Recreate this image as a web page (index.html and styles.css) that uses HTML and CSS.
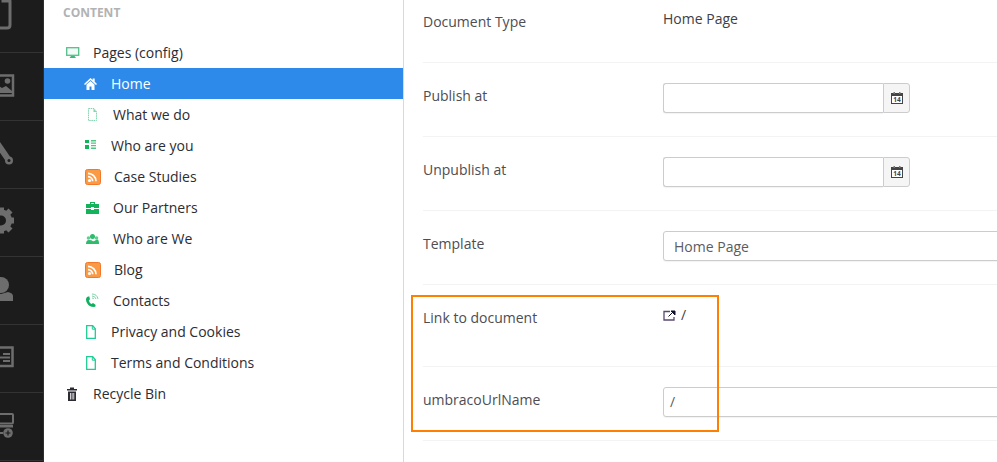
FILE: index.html
```html
<!DOCTYPE html>
<html lang="en">
<head>
<meta charset="utf-8">
<title>Content</title>
<link rel="stylesheet" href="styles.css">
</head>
<body>
<div class="app">
  <nav class="rail">
    <div class="rail-item first"><svg class="rail-icon" viewBox="0 0 28 28"><path d="M4 -8h11l7 7v24q0 3-3 3h-13q-3 0-3-3z" fill="none" stroke="#6d6d6d" stroke-width="3"/><path d="M15 -8v7h7" fill="none" stroke="#6d6d6d" stroke-width="3"/></svg></div>
    <div class="rail-item"><svg class="rail-icon" viewBox="0 0 28 28"><rect x="-2" y="2.500" width="27" height="20" fill="none" stroke="#6d6d6d" stroke-width="2.500"/><circle cx="19.500" cy="8" r="2.800" fill="#6d6d6d"/><path d="M0 20l9-8 5 3 4-2 6 5v2z" fill="#6d6d6d"/></svg></div>
    <div class="rail-item"><svg class="rail-icon" viewBox="0 0 28 28"><path d="M9 2l12 17.500" fill="none" stroke="#6d6d6d" stroke-width="6"/><circle cx="21" cy="19.500" r="4" fill="#6d6d6d"/><circle cx="21" cy="19.500" r="1.500" fill="#1c1c1c"/></svg></div>
    <div class="rail-item"><svg class="rail-icon" viewBox="0 0 28 28"><circle cx="13" cy="11.500" r="8" fill="none" stroke="#6d6d6d" stroke-width="6"/><path d="M22.500 8.500h3.500v6h-3.500zM10 -1.500h6v4h-6zM10 20.500h6v4h-6zM20.500 -.5l4 4-3 3-4-4zM20.500 23.500l4-4-3-3-4 4z" fill="#6d6d6d"/></svg></div>
    <div class="rail-item"><svg class="rail-icon" viewBox="0 0 28 28"><circle cx="13" cy="8" r="8" fill="#6d6d6d"/><path d="M0 24v-5q1-3 6-4l7 2 7-2q5 1 5 4v5z" fill="#6d6d6d"/></svg></div>
    <div class="rail-item"><svg class="rail-icon" viewBox="0 0 28 28"><path d="M0 6h7v-3.500h17.500v18.500h-24.500z" fill="none" stroke="#6d6d6d" stroke-width="2.500"/><path d="M15 8h7v2h-7zM4 11.500h18v2h-18zM15 15h7v2h-7z" fill="#6d6d6d"/></svg></div>
    <div class="rail-item"><svg class="rail-icon" viewBox="0 0 28 28"><rect x="0" y="1" width="25" height="9.500" rx="1" fill="none" stroke="#6d6d6d" stroke-width="2"/><path d="M0 12h25v2.500h-25zM0 19h15v2h-15z" fill="#6d6d6d"/><circle cx="20" cy="20" r="4.800" fill="#6d6d6d"/><path d="M17.500 19.400h5v1.200h-5zM19.400 17.500h1.200v5h-1.200z" fill="#1c1c1c"/></svg></div>
  </nav>

  <aside class="tree">
    <h2 class="tree-title">Content</h2>
    <ul class="tree-list">
      <li class="node root gap-27">
        <svg class="node-icon" viewBox="0 0 18 18"><rect x="0.700" y="4.700" width="12" height="7.600" fill="#f2fbf6" stroke="#52c08a" stroke-width="1.300"/><path d="M5 13h3.500l1.500 2h-6.500z" fill="#3cb878"/></svg>
        <span>Pages (config)</span>
      </li>
      <li class="node active gap-27">
        <svg class="node-icon" viewBox="0 0 18 18"><path d="M6.500 4l2.200 2v-1.500h2v3.300l2.300 2.200-1 .9-5.500-5-5.500 5-1-.9z" fill="#fff"/><path d="M2.500 10.500l4-3.600 4 3.600v5.500h-3v-3.500h-2v3.500h-3z" fill="#fff"/></svg>
        <span>Home</span>
      </li>
      <li class="node gap-29">
        <svg class="node-icon" viewBox="0 0 18 18"><path d="M4.500 3.500h5.500l2.500 3v9h-8z" fill="none" stroke="#7fd6ac" stroke-width="1" stroke-dasharray="1.500 .7"/><path d="M9.500 3.500v3.500h3z" fill="#7fd6ac"/></svg>
        <span>What we do</span>
      </li>
      <li class="node gap-27">
        <svg class="node-icon" viewBox="0 0 18 18"><path d="M1 4h4v3h-4zM1 9h4v4h-4z" fill="#12b35a"/><path d="M7 4h5v1.500h-5zM7 6.500h5v1.300h-5zM7 9h5v1.300h-5zM7 11.500h5v1.500h-5z" fill="#4fc585"/></svg>
        <span>Who are you</span>
      </li>
      <li class="node gap-30">
        <svg class="node-icon" viewBox="0 0 18 18"><use href="#rss"/></svg>
        <span>Case Studies</span>
      </li>
      <li class="node gap-29">
        <svg class="node-icon" viewBox="0 0 18 18"><path d="M6 6v-2h5v2h-1.200v-1h-2.600v1z" fill="#12b35a"/><path d="M2 6h13v4h-5v-1h-3v1h-5zM2 11h5v1h3v-1h5v5h-13z" fill="#12b35a"/></svg>
        <span>Our Partners</span>
      </li>
      <li class="node gap-29">
        <svg class="node-icon" viewBox="0 0 18 18"><circle cx="8.500" cy="7.500" r="2.500" fill="#2dbb6c"/><circle cx="4.500" cy="9" r="1.800" fill="#62cc93"/><circle cx="12.500" cy="9" r="1.800" fill="#62cc93"/><path d="M2 15q0-4 3-4t3.500 1 3.500-1 3 4z" fill="#2dbb6c"/></svg>
        <span>Who are We</span>
      </li>
      <li class="node gap-30">
        <svg class="node-icon" viewBox="0 0 18 18"><use href="#rss"/></svg>
        <span>Blog</span>
      </li>
      <li class="node gap-29">
        <svg class="node-icon" viewBox="0 0 18 18"><path d="M3 6q-2 2 0 6t7 4l1.500-.5v-1.800l-2.500-1.700-1.500 1q-2-1-2.700-3.600l1.200-1.200-.8-3z" fill="#10b060"/><path d="M8 5q3 0 4 3M8 3q5 0 6 5M8 7q1.500 0 2 1" fill="none" stroke="#7dd5a8" stroke-width="1"/></svg>
        <span>Contacts</span>
      </li>
      <li class="node gap-27">
        <svg class="node-icon" viewBox="0 0 18 18"><use href="#page"/></svg>
        <span>Privacy and Cookies</span>
      </li>
      <li class="node gap-27">
        <svg class="node-icon" viewBox="0 0 18 18"><use href="#page"/></svg>
        <span>Terms and Conditions</span>
      </li>
      <li class="node root gap-27">
        <svg class="node-icon" viewBox="0 0 18 18"><path d="M4 3.500h4v1.500h3v1.500h-10v-1.500h3z" fill="#2b2b33"/><path d="M2 7.500h8v9.500h-8z" fill="#2b2b33"/><path d="M4 9h.8v6.500h-.8zM5.700 9h.8v6.500h-.8zM7.400 9h.8v6.500h-.8z" fill="#fff"/></svg>
        <span>Recycle Bin</span>
      </li>
    </ul>
    <svg class="defs" aria-hidden="true">
      <defs>
        <g id="rss">
          <rect x="1.500" y="2.500" width="15" height="15" rx="2" fill="#fb9a45" stroke="#f4772a"/>
          <circle cx="5.500" cy="13.500" r="1.600" fill="#fff"/>
          <path d="M4 9.300a4.700 4.700 0 0 1 4.700 4.700M4 6a8 8 0 0 1 8 8" transform="translate(0 .3)" fill="none" stroke="#fff" stroke-width="1.700"/>
        </g>
        <g id="page">
          <path d="M2.700 3.700h6l2.600 3v9.600h-8.600z" fill="#fff" stroke="#1fcb96" stroke-width="1.300"/>
          <path d="M8.300 3.700v3.500h3" fill="none" stroke="#1fcb96" stroke-width="1"/>
        </g>
      </defs>
    </svg>
  </aside>

  <main class="props">
    <section class="prop">
      <div class="prop-label">Document Type</div>
      <div class="prop-value">Home Page</div>
    </section>
    <section class="prop">
      <div class="prop-label">Publish at</div>
      <div class="date-field">
        <input class="field date-input" type="text" aria-label="Publish at">
        <span class="date-addon"><svg class="cal" viewBox="0 0 12 12"><use href="#cal"/></svg></span>
      </div>
    </section>
    <section class="prop">
      <div class="prop-label">Unpublish at</div>
      <div class="date-field">
        <input class="field date-input" type="text" aria-label="Unpublish at">
        <span class="date-addon"><svg class="cal" viewBox="0 0 12 12"><use href="#cal"/></svg></span>
      </div>
    </section>
    <section class="prop">
      <div class="prop-label">Template</div>
      <div class="field wide low">Home Page</div>
    </section>
    <section class="prop tall">
      <div class="prop-label">Link to document</div>
      <div class="prop-value link-value">
        <svg class="ext" viewBox="0 0 13 11"><path d="M7 1.500h-6v8.500h10v-3" fill="none" stroke="#5a4a70" stroke-width="1.300"/><path d="M5.500 6.500l3.500-3.500M8 1h4v4z" fill="#12122a" stroke="#12122a" stroke-width="1"/></svg>
        <span>/</span>
      </div>
    </section>
    <section class="prop">
      <div class="prop-label">umbracoUrlName</div>
      <div class="field wide tight">/</div>
    </section>
    <svg class="defs" aria-hidden="true">
      <defs>
        <g id="cal">
          <rect x="0.500" y="1.500" width="11" height="10" fill="#fff" stroke="#444" stroke-width="1"/>
          <path d="M0 1h12v3h-12z" fill="#444"/>
          <path d="M2.500 0h1.500v2h-1.500zM8 0h1.500v2h-1.500z" fill="#777"/>
          <text x="6" y="10.300" text-anchor="middle" class="cal-num">14</text>
        </g>
      </defs>
    </svg>
  </main>
  <div class="highlight"></div>
</div>
</body>
</html>
```

FILE: styles.css
```css
* { box-sizing: border-box; }
html, body { margin: 0; padding: 0; height: 100%; background: #fff; overflow: hidden; }
body { font-family: "Open Sans", sans-serif; font-size: 14px; line-height: 20px; color: #303033; }

.app { position: relative; display: flex; width: 997px; height: 462px; overflow: hidden; }

.rail { flex: 0 0 44px; background: #1c1c1c; overflow: hidden; border-right: 1px solid #2e2e2e; }
.rail-item { height: 68px; border-bottom: 1px solid #333; display: flex; align-items: center; overflow: hidden; }
.rail-item.first { height: 53px; align-items: flex-start; }
.rail-icon { width: 28px; height: 28px; margin-left: -12px; overflow: visible; flex-shrink: 0; }
.rail-item.first .rail-icon { margin-top: 2px; }

.tree { flex: 0 0 360px; border-right: 1px solid #d9d9d9; }
.tree-title { margin: 0; padding: 3px 0 0 19px; height: 37px; font-size: 12px; line-height: 20px; font-weight: 700; text-transform: uppercase; color: #b2b2b2; }
.tree-list { list-style: none; margin: 0; padding: 0; }
.node { display: flex; height: 31px; line-height: 31px; padding-left: 40px; color: #2c2c33; white-space: nowrap; }
.node.root { padding-left: 22px; }
.node.active { background: #2e8aea; color: #fff; }
.node-icon { width: 18px; height: 18px; margin-top: 6px; flex-shrink: 0; overflow: visible; }
.gap-27 .node-icon { margin-right: 9px; }
.gap-29 .node-icon { margin-right: 11px; }
.gap-30 .node-icon { margin-right: 12px; }
.defs { position: absolute; width: 0; height: 0; }

.props { flex: 1; min-width: 0; padding-left: 19px; margin-top: -11px; }
.prop { display: grid; grid-template-columns: 240px 1fr; height: 74px; padding-top: 20px; border-bottom: 1px solid #f3f3f3; }
.prop.tall { height: 82px; }
.prop-label { padding-top: 3px; color: #4d4d52; }
.prop-value { color: #404045; }
.link-value { display: flex; align-items: center; height: 20px; }

.field { height: 30px; border: 1px solid #ccc; border-radius: 3px; background: #fff; padding: 0 10px; font: inherit; line-height: 28px; color: #5c5c60; box-shadow: 0 1px 1px rgba(0,0,0,.05); }
.wide { width: 400px; }
.low { line-height: 30px; }
.tight { padding-left: 6px; }
.date-field { display: flex; width: 247px; height: 30px; }
.date-input { width: 220px; border-radius: 3px 0 0 3px; border-right: 0; }
.date-addon { width: 27px; height: 30px; display: flex; align-items: center; justify-content: center; background: #f5f5f5; border: 1px solid #ccc; border-radius: 0 3px 3px 0; }
.cal { width: 12px; height: 12px; display: block; }
.cal-num { font: 700 6.500px "Open Sans", sans-serif; fill: #444; }
.ext { width: 13px; height: 11px; margin-right: 5px; flex-shrink: 0; }

.highlight { position: absolute; left: 411px; top: 295px; width: 308px; height: 137px; border: 2px solid #ff7f00; pointer-events: none; }
```
